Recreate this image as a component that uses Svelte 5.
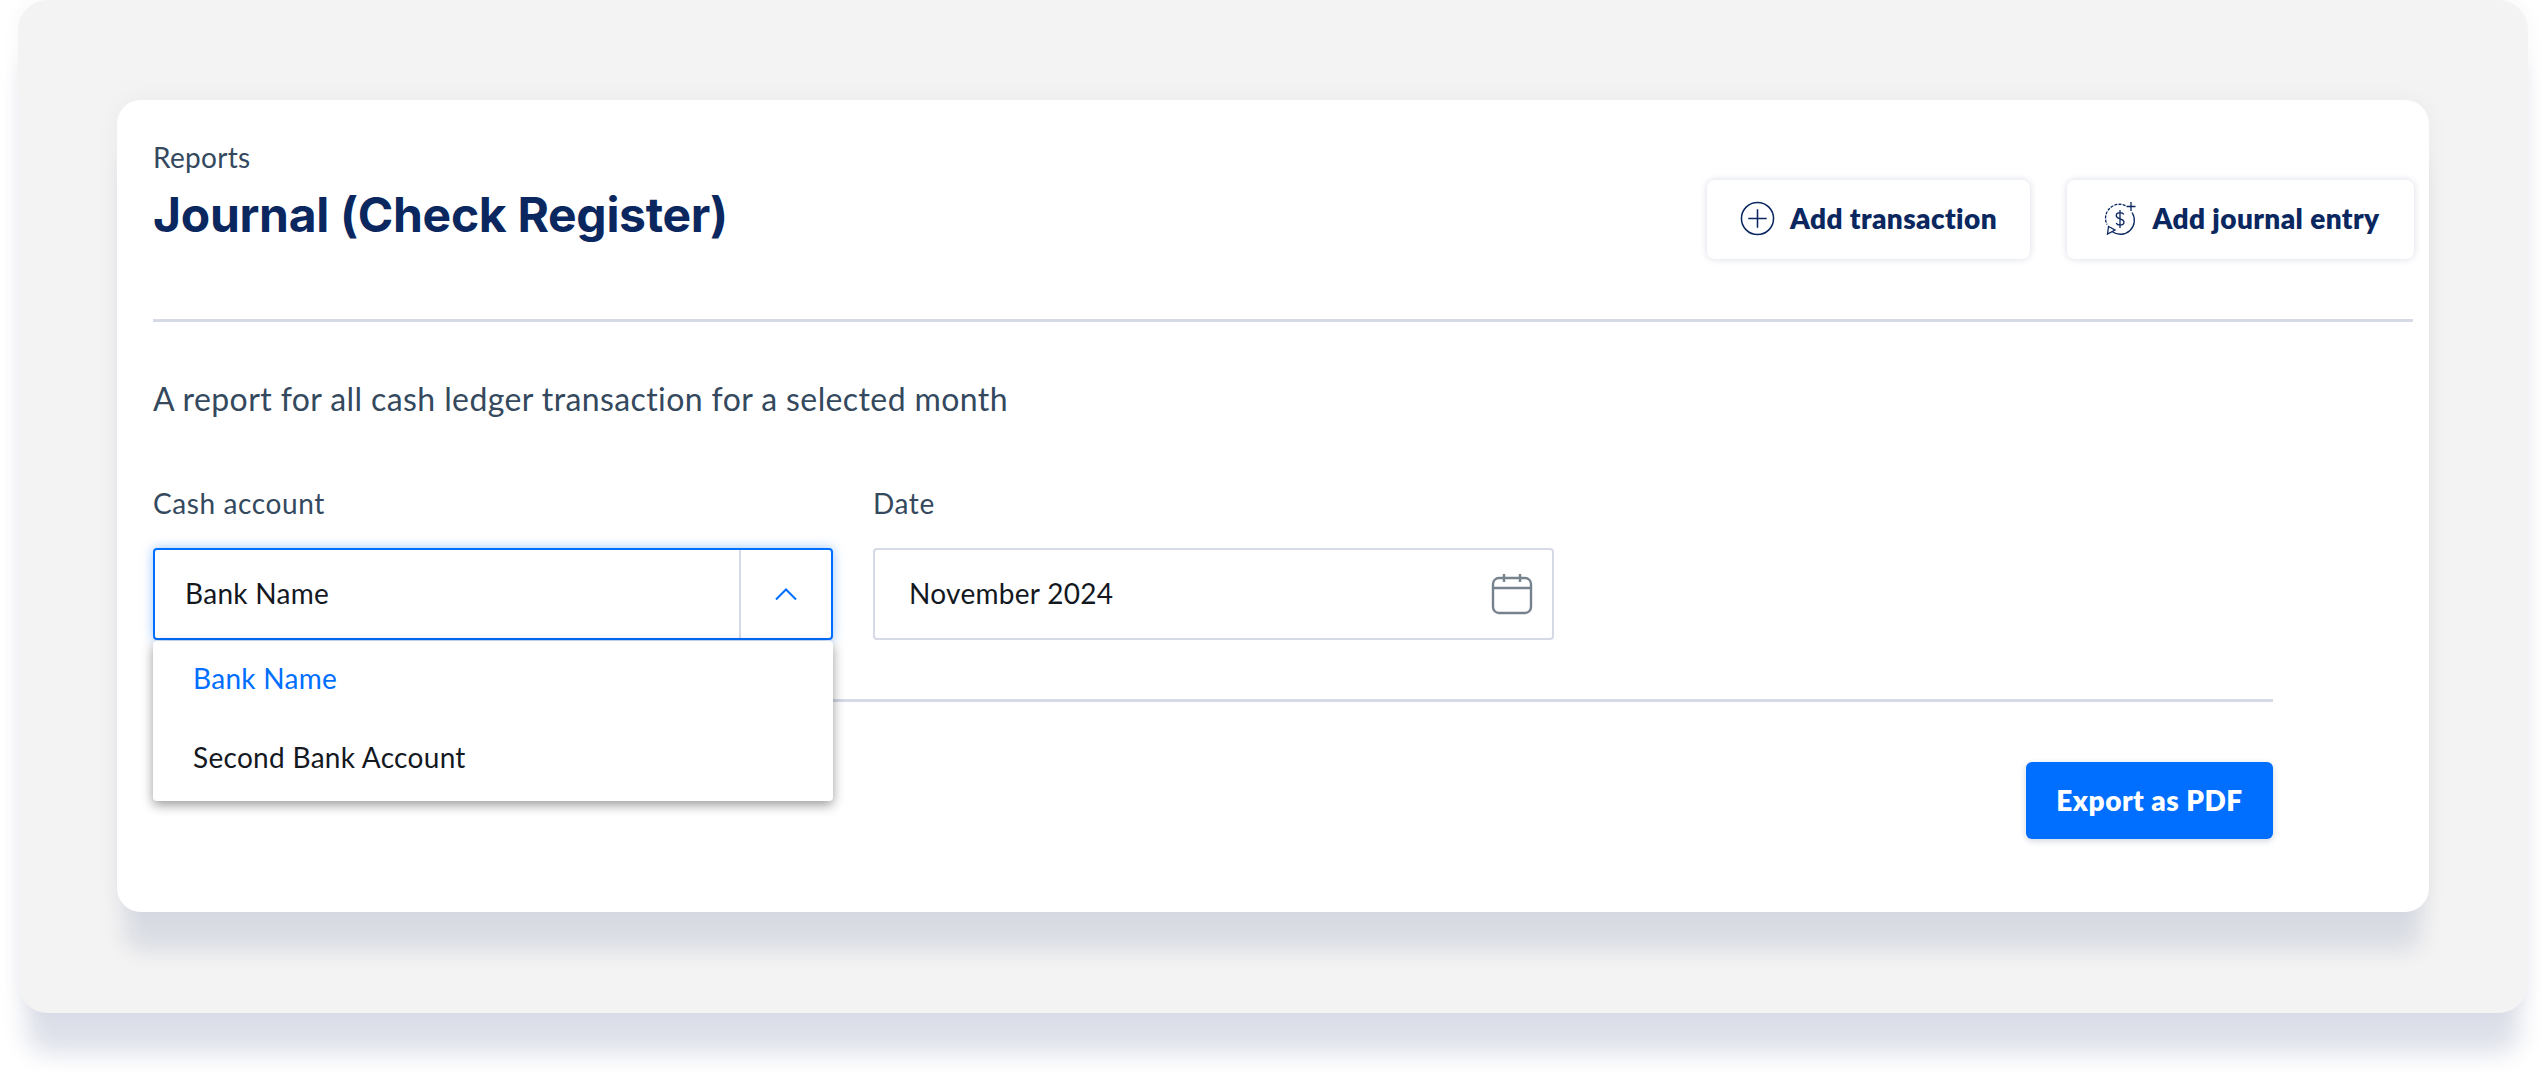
<script lang="ts">
  let accounts = ['Bank Name', 'Second Bank Account'];
  let selected = 'Bank Name';
</script>

<div class="page">
  <div class="panel">
    <div class="card">
      <header class="head">
        <div class="titles">
          <div class="crumb">Reports</div>
          <h1>Journal (Check Register)</h1>
        </div>
        <div class="actions">
          <button class="ghost tx">
            <svg width="35" height="35" viewBox="0 0 36 36" fill="none" stroke="#0a2760" stroke-width="1.6">
              <circle cx="18" cy="18" r="16.5" />
              <path d="M18 8.5v19M8.5 18h19" />
            </svg>
            Add transaction
          </button>
          <button class="ghost je">
            <svg width="36" height="36" viewBox="0 0 36 36" fill="none" stroke="#0a2760" stroke-width="1.3">
              <path d="M23.5 4.600A14 14 0 0 0 5 23.500" stroke-dasharray="3 1.200" />
              <path d="M30 11.500A14 14 0 0 1 10 30.500" />
              <path d="M29 1v9M24.500 5.500h9" />
              <path d="M5.500 33l1-7.500 6.500 3.500z" />
              <path d="M21.800 13.600c-.6-1.300-2-2-3.700-2-2.200 0-3.900 1.100-3.900 3 0 4.200 7.800 2.300 7.800 6.500 0 2-1.700 3.100-3.900 3.100-1.800 0-3.300-.8-3.900-2.200M18 9v18" />
            </svg>
            Add journal entry
          </button>
        </div>
      </header>

      <p class="intro">A report for all cash ledger transaction for a selected month</p>

      <div class="fields">
        <div class="field account">
          <span class="label">Cash account</span>
          <div class="select">
            <span class="value">{selected}</span>
            <span class="caret">
              <svg width="24" height="14" viewBox="0 0 24 14" fill="none" stroke="#006eff" stroke-width="2">
                <path d="M2 12.500l10-10 10 10" />
              </svg>
            </span>
            <ul class="menu">
              {#each accounts as a}
                <li class:active={a === selected}>{a}</li>
              {/each}
            </ul>
          </div>
        </div>
        <div class="field date">
          <span class="label">Date</span>
          <div class="datebox">
            <span class="value">November 2024</span>
            <svg width="42" height="42" viewBox="0 0 42 42" fill="none" stroke="#76838f" stroke-width="2.400">
              <rect x="2" y="5" width="38" height="35" rx="6" />
              <path d="M2 15h38M13 1v8M29 1v8" />
            </svg>
          </div>
        </div>
      </div>

      <div class="foot">
        <button class="primary">Export as PDF</button>
      </div>
    </div>
  </div>
</div>

<style>
  :global(body) {
    background: #fff;
    font-family: "Lato", "Noto Sans", sans-serif;
  }

  .page {
    padding: 0 18px 58px;
    height: 1071px;
    box-sizing: border-box;
    overflow: hidden;
  }

  .panel {
    height: 1013px;
    box-sizing: border-box;
    padding: 100px 99px 0;
    background: #f3f3f3;
    border-radius: 30px;
    box-shadow: 0 48px 24px -8px rgba(11, 37, 96, 0.14), 0 0 20px rgba(11, 37, 96, 0.04);
  }

  .card {
    height: 812px;
    box-sizing: border-box;
    padding: 0 16px 0 36px;
    background: #fff;
    border-radius: 24px;
    box-shadow: 0 46px 22px -8px rgba(11, 37, 96, 0.11), 0 0 24px rgba(11, 37, 96, 0.04);
  }

  .head {
    display: flex;
    justify-content: space-between;
    height: 222px;
    box-sizing: border-box;
    border-bottom: 3px solid #d6d9e6;
  }

  .titles {
    padding-top: 41px;
  }

  .crumb {
    font-size: 28px;
    line-height: 32px;
    letter-spacing: 0.3px;
    color: #34495e;
  }

  h1 {
    margin: 14px 0 0;
    font-family: "Inter", sans-serif;
    font-size: 48px;
    line-height: 56px;
    font-weight: 700;
    color: #0a2760;
    letter-spacing: -0.3px;
  }

  .actions {
    display: flex;
    gap: 37px;
    padding-top: 80px;
    margin-right: -1px;
  }

  .ghost {
    display: flex;
    align-items: center;
    justify-content: center;
    gap: 15px;
    height: 79px;
    padding: 0 0 4px;
    background: #fff;
    border: 0;
    border-radius: 8px;
    box-shadow: 0 0 7px rgba(20, 40, 90, 0.17);
    font: 800 28px "Lato", sans-serif;
    letter-spacing: 0.4px;
    color: #0a2760;
  }

  .ghost svg {
    margin-top: 2px;
  }

  .tx { width: 323px; }
  .je { width: 347px; }

  .intro {
    margin: 58px 0 0;
    font-size: 32px;
    line-height: 38px;
    letter-spacing: 0.4px;
    color: #34495e;
  }

  .fields {
    display: flex;
    gap: 40px;
    margin-top: 69px;
  }

  .field {
    display: flex;
    flex-direction: column;
    gap: 29px;
  }

  .label {
    font-size: 28px;
    line-height: 32px;
    letter-spacing: 0.6px;
    color: #34495e;
  }

  .account { width: 680px; }
  .date { width: 681px; }

  .select, .datebox {
    position: relative;
    display: flex;
    align-items: center;
    height: 92px;
    box-sizing: border-box;
    background: #fff;
    border-radius: 4px;
  }

  .select {
    border: 2px solid #006eff;
    box-shadow: 0 0 12px rgba(0, 110, 255, 0.4);
  }

  .datebox {
    justify-content: space-between;
    padding: 0 19px 0 34px;
    border: 2px solid #d6d9e6;
  }

  .value {
    font-size: 28px;
    letter-spacing: 0.3px;
    color: #14181f;
    padding-bottom: 3px;
  }

  .select .value {
    flex: 1;
    padding-left: 30px;
  }

  .caret {
    display: flex;
    align-items: center;
    justify-content: center;
    width: 90px;
    height: 100%;
    border-left: 2px solid #d6d9e6;
  }

  .menu {
    position: absolute;
    left: -2px;
    right: -2px;
    top: 91px;
    margin: 0;
    padding: 0;
    height: 160px;
    list-style: none;
    background: #fff;
    border-radius: 4px;
    box-shadow: 0 4px 12px rgba(0, 0, 0, 0.4);
  }

  .menu li {
    height: 79px;
    padding-left: 40px;
    font-size: 28px;
    line-height: 74px;
    letter-spacing: 0.3px;
    color: #14181f;
  }

  .menu li.active {
    color: #006eff;
  }

  .foot {
    display: flex;
    justify-content: flex-end;
    margin: 59px 140px 0 0;
    padding-top: 60px;
    border-top: 3px solid #d6d9e6;
  }

  .primary {
    width: 247px;
    height: 77px;
    padding: 0 0 2px;
    border: 0;
    border-radius: 6px;
    background: #006eff;
    box-shadow: 0 2px 6px rgba(20, 40, 90, 0.2);
    font: 800 28px "Lato", sans-serif;
    letter-spacing: 0.5px;
    color: #fff;
  }
</style>
